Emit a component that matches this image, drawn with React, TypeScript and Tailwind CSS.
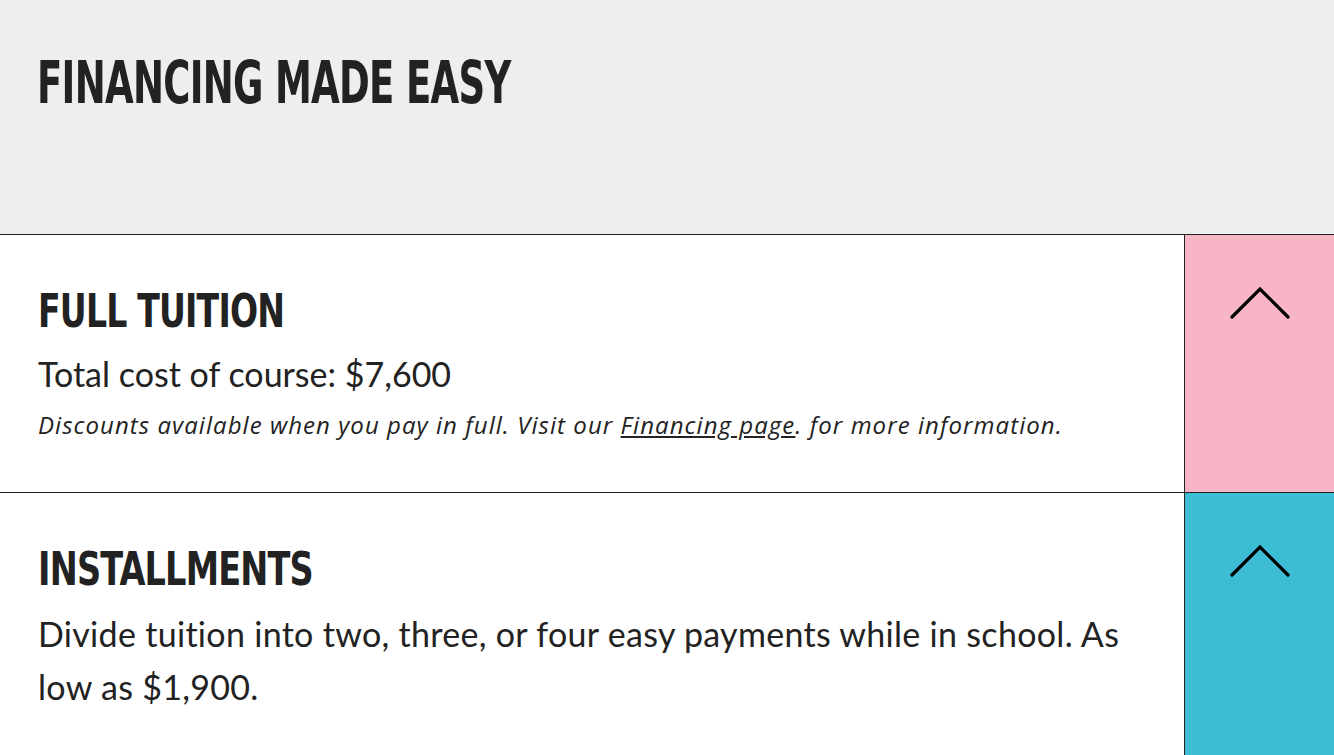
import React from 'react';

const heading = { fontFamily: '"DejaVu Sans Condensed", "DejaVu Sans", sans-serif' };
const body = { fontFamily: 'Lato, "Open Sans", sans-serif' };
const note = { fontFamily: '"Open Sans", Lato, sans-serif' };

const Chevron: React.FC = () => (
  <svg width="60" height="34" viewBox="0 0 60 34" fill="none" stroke="#000" strokeWidth="3.2" strokeLinecap="round" strokeLinejoin="miter">
    <path d="M2 31 L30 3 L58 31" />
  </svg>
);

type Row = {
  title: string;
  scale: string;
  color: string;
  height: string;
  children: React.ReactNode;
};

const PlanRow: React.FC<Row> = ({ title, scale, color, height, children }) => (
  <div className={`flex border-b border-[#222] ${height}`}>
    <div className="flex-1 pl-[38px] pr-[60px] pt-[53px] text-[#222]">
      <h2 className={`text-[46px] font-bold leading-none tracking-[-1px] origin-left whitespace-nowrap ${scale}`} style={heading}>{title}</h2>
      <div className="mt-[18px]" style={body}>{children}</div>
    </div>
    <div className={`w-[150px] border-l border-[#222] flex justify-center pt-[51px] ${color}`}>
      <Chevron />
    </div>
  </div>
);

export default function App() {
  return (
    <div className="w-[1334px] h-screen bg-white overflow-hidden">
      <div className="h-[235px] bg-[#eeeeee] border-b border-[#222] pl-[37px] pt-[54px]">
        <h1 className="text-[58px] font-bold leading-none text-[#222] tracking-[-1px] origin-left scale-x-[0.71] whitespace-nowrap" style={heading}>
          FINANCING MADE EASY
        </h1>
      </div>
      <PlanRow title="FULL TUITION" scale="scale-x-[0.8]" color="bg-[#f7b5c6]" height="h-[258px]">
        <p className="text-[34px] leading-[44px]">Total cost of course: $7,600</p>
        <p className="text-[24px] italic mt-[14px] leading-[30px] tracking-[1.05px]" style={note}>
          Discounts available when you pay in full. Visit our <a className="underline" href="#">Financing page</a>. for more information.
        </p>
      </PlanRow>
      <PlanRow title="INSTALLMENTS" scale="scale-x-[0.81]" color="bg-[#3dbdd4]" height="h-[300px]">
        <p className="text-[34px] leading-[53px] -mt-[3px] tracking-[0.3px]">
          Divide tuition into two, three, or four easy payments while in school. As low as $1,900.
        </p>
      </PlanRow>
    </div>
  );
}
